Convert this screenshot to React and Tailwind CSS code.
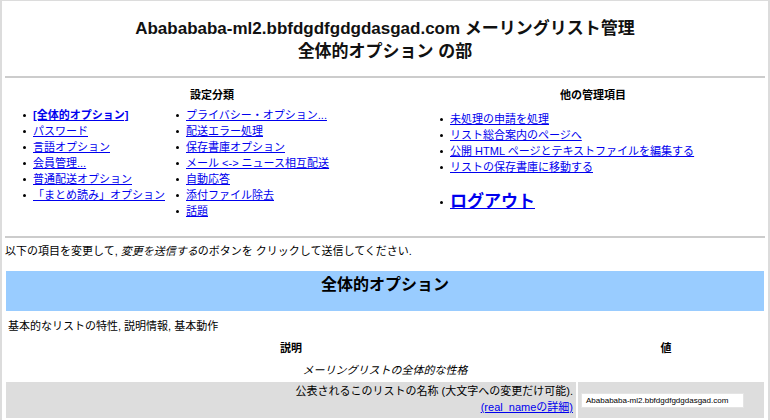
import React from 'react';

const leftA = ['[全体的オプション]', 'パスワード', '言語オプション', '会員管理...', '普通配送オプション', '「まとめ読み」オプション'];
const leftB = ['プライバシー・オプション...', '配送エラー処理', '保存書庫オプション', 'メール <-> ニュース相互配送', '自動応答', '添付ファイル除去', '話題'];
const right = ['未処理の申請を処理', 'リスト総合案内のページへ', '公開 HTML ページとテキストファイルを編集する', 'リストの保存書庫に移動する'];

const Dot = () => <span className="w-[3px] h-[3px] rounded-full bg-black shrink-0" />;

const Item = ({ children, bold }) => (
  <li className="flex items-center h-4 gap-[7px]">
    <Dot />
    <a href="#" className={'text-[#0000ee] underline whitespace-nowrap ' + (bold ? 'font-bold' : '')}>{children}</a>
  </li>
);

export default function App() {
  return (
    <div className="w-[770px] h-[420px] overflow-hidden bg-white border-t border-l-2 border-r-2 border-[#dcdcdc] text-black text-[11px] leading-4 font-['Liberation_Sans','Noto_Sans_CJK_JP',sans-serif]">
      {/* ヘッダー */}
      <div className="pt-[16px] text-center text-[17px] leading-[23px] font-bold text-[#111]">
        <div>Ababababa-ml2.bbfdgdfgdgdasgad.com メーリングリスト管理</div>
        <div>全体的オプション の部</div>
      </div>
      <div className="mt-[13px] mx-[3px] h-[2px] bg-[#cccccc]" />

      {/* ナビ */}
      <div className="flex mt-[9px] h-[148px]">
        <div className="w-[420px] flex flex-col">
          <div className="text-center font-bold">設定分類</div>
          <div className="flex mt-[4px] pl-[21px]">
            <ul className="w-[153px] flex flex-col">
              {leftA.map((t, i) => <Item key={t} bold={i === 0}>{t}</Item>)}
            </ul>
            <ul className="flex flex-col">
              {leftB.map(t => <Item key={t}>{t}</Item>)}
            </ul>
          </div>
        </div>
        <div className="flex-1 flex flex-col">
          <div className="text-center font-bold pr-[4px]">他の管理項目</div>
          <ul className="mt-[8px] pl-[18px] flex flex-col">
            {right.map(t => <Item key={t}>{t}</Item>)}
            <li className="flex items-center h-[22px] gap-[7px] mt-[16px]">
              <Dot />
              <a href="#" className="text-[#0000ee] underline font-bold text-[17px]">ログアウト</a>
            </li>
          </ul>
        </div>
      </div>
      <div className="mt-[1px] mx-[3px] h-[2px] bg-[#cccccc]" />

      <div className="mt-[5px] pl-[3px]">
        以下の項目を変更して, <i>変更を送信する</i>のボタンを クリックして送信してください.
      </div>

      {/* 全体的オプション */}
      <div className="mt-[12px] mx-[4px] h-[40px] bg-[#99ccff] text-center text-[16px] leading-6 font-bold pt-[2px]">
        全体的オプション
      </div>
      <div className="mt-[7px] pl-[6px]">基本的なリストの特性, 説明情報, 基本動作</div>

      <div className="mt-[3px] mx-[4px] grid grid-cols-[570px_1fr] gap-x-[2px]">
        <div className="text-center font-bold py-[3px]">説明</div>
        <div className="text-center font-bold py-[3px] pr-[10px]">値</div>
        <div className="col-span-2 text-center italic py-[3px]">メーリングリストの全体的な性格</div>
        <div className="bg-[#dddddd] h-[36px] mt-[1px] text-right pr-[3px] pt-[1px]">
          <div>公表されるこのリストの名称 (大文字への変更だけ可能).</div>
          <a href="#" className="text-[#0000ee] underline">(real_nameの詳細)</a>
        </div>
        <div className="bg-[#dddddd] h-[36px] mt-[1px] flex items-center pl-[3px] pr-[20px]">
          <div className="w-[163px] h-[15px] bg-white border border-[#e4e4e4] text-[8px] leading-[13px] pl-[4px] whitespace-nowrap overflow-hidden">
            Ababababa-ml2.bbfdgdfgdgdasgad.com
          </div>
        </div>
      </div>
    </div>
  );
}
